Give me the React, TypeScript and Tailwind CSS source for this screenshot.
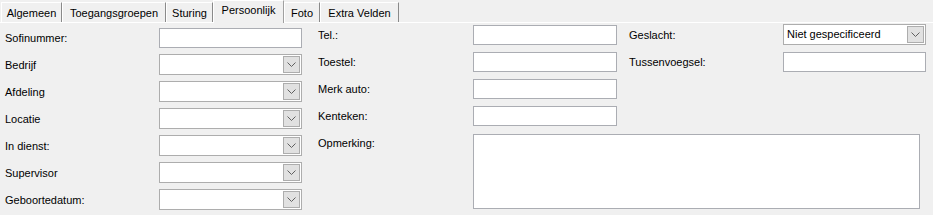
const tabs = [
  { label: "Algemeen", w: "w-[61px]" },
  { label: "Toegangsgroepen", w: "w-[104px]" },
  { label: "Sturing", w: "w-[47px]" },
  { label: "Persoonlijk", w: "w-[71px]", active: true },
  { label: "Foto", w: "w-[36px]" },
  { label: "Extra Velden", w: "w-[79px]" },
];

function TextBox({ className = "" }: { className?: string }) {
  return (
    <div
      className={`h-[20px] w-[143px] border border-[#abadb3] bg-white ${className}`}
    />
  );
}

function Combo({ value = "" }: { value?: string }) {
  return (
    <div className="flex h-[21px] w-[143px] items-center border border-[#adadad] bg-white pl-[3px] pr-[1px]">
      <span className="flex-1 truncate text-black">{value}</span>
      <div className="flex h-[17px] w-[17px] items-center justify-center border border-[#adadad] bg-[#e1e1e1]">
        <svg width="9" height="5" viewBox="0 0 9 5" fill="none">
          <path d="M0.5 0.5 L4.5 4.5 L8.5 0.5" stroke="#606060" strokeWidth="1" />
        </svg>
      </div>
    </div>
  );
}

function Row({
  label,
  labelW,
  children,
}: {
  label: string;
  labelW: string;
  children: React.ReactNode;
}) {
  return (
    <div className="flex h-[21px] items-center">
      <div className={`${labelW} pt-[1px]`}>{label}</div>
      {children}
    </div>
  );
}

export default function App() {
  return (
    <div
      className="h-[215px] w-[933px] overflow-hidden bg-[#f0f0f0] text-[11px] leading-[13px] text-black"
      style={{ fontFamily: '"Liberation Sans", Arial, sans-serif' }}
    >
      {/* Tabs */}
      <div className="flex h-[23px] items-end border-b border-white pl-[1px]">
        {tabs.map((t) =>
          t.active ? (
            <div
              key={t.label}
              className={`${t.w} -mb-[1px] flex h-[23px] items-start justify-center border-l border-t border-r border-l-white border-t-white border-r-[#a0a0a0] bg-[#f0f0f0] pt-[3px]`}
            >
              {t.label}
            </div>
          ) : (
            <div
              key={t.label}
              className={`${t.w} flex h-[20px] items-start justify-center border-l border-t border-r border-l-white border-t-white border-r-[#8a8a8a] bg-[#f0f0f0] pt-[4px]`}
            >
              {t.label}
            </div>
          )
        )}
      </div>

      {/* Content */}
      <div className="flex">
        {/* Left column */}
        <div className="flex flex-col gap-[6px] pl-[5px] pt-[4px]">
          <Row label="Sofinummer:" labelW="w-[154px]">
            <TextBox />
          </Row>
          <Row label="Bedrijf" labelW="w-[154px]">
            <Combo />
          </Row>
          <Row label="Afdeling" labelW="w-[154px]">
            <Combo />
          </Row>
          <Row label="Locatie" labelW="w-[154px]">
            <Combo />
          </Row>
          <Row label="In dienst:" labelW="w-[154px]">
            <Combo />
          </Row>
          <Row label="Supervisor" labelW="w-[154px]">
            <Combo />
          </Row>
          <Row label="Geboortedatum:" labelW="w-[154px]">
            <Combo />
          </Row>
        </div>

        {/* Middle + right */}
        <div className="ml-[16px] pt-[1px]">
          <div className="flex">
            <div className="flex flex-col gap-[6px]">
              <Row label="Tel.:" labelW="w-[155px]">
                <TextBox className="w-[144px]" />
              </Row>
              <Row label="Toestel:" labelW="w-[155px]">
                <TextBox className="w-[144px]" />
              </Row>
              <Row label="Merk auto:" labelW="w-[155px]">
                <TextBox className="w-[144px]" />
              </Row>
              <Row label="Kenteken:" labelW="w-[155px]">
                <TextBox className="w-[144px]" />
              </Row>
            </div>
            <div className="ml-[12px] flex flex-col gap-[6px]">
              <Row label="Geslacht:" labelW="w-[154px]">
                <Combo value="Niet gespecificeerd" />
              </Row>
              <Row label="Tussenvoegsel:" labelW="w-[154px]">
                <TextBox />
              </Row>
            </div>
          </div>
          <div className="mt-[8px] flex">
            <div className="w-[155px] pt-[3px]">Opmerking:</div>
            <div className="h-[75px] w-[447px] border border-[#abadb3] bg-white" />
          </div>
        </div>
      </div>
    </div>
  );
}
